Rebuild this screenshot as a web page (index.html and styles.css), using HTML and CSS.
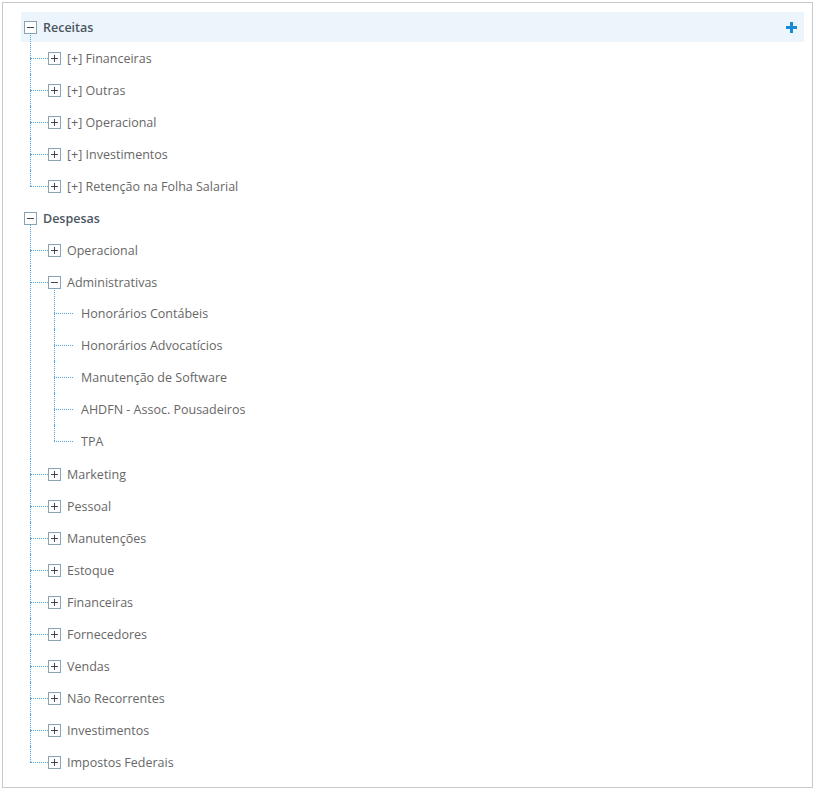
FILE: index.html
```html
<!DOCTYPE html>
<html>
<head>
<meta charset="utf-8">
<link rel="stylesheet" href="styles.css">
</head>
<body>
<div class="tree">
  <ul class="root">
    <li class="top">
      <div class="row row-top row-hover">
        <span class="tg minus"></span><span class="label strong">Receitas</span>
        <span class="add"><svg width="11" height="11" viewBox="0 0 11 11"><rect x="4" y="0" width="3" height="11" fill="#1a8ad4"/><rect x="0" y="4" width="11" height="3" fill="#1a8ad4"/></svg></span>
      </div>
      <ul class="children">
        <li><div class="row"><span class="tg plus"></span><span class="label">[+] Financeiras</span></div></li>
        <li><div class="row"><span class="tg plus"></span><span class="label">[+] Outras</span></div></li>
        <li><div class="row"><span class="tg plus"></span><span class="label">[+] Operacional</span></div></li>
        <li><div class="row"><span class="tg plus"></span><span class="label">[+] Investimentos</span></div></li>
        <li><div class="row"><span class="tg plus"></span><span class="label">[+] Retenção na Folha Salarial</span></div></li>
      </ul>
    </li>
    <li class="top">
      <div class="row row-top">
        <span class="tg minus"></span><span class="label strong">Despesas</span>
      </div>
      <ul class="children">
        <li><div class="row"><span class="tg plus"></span><span class="label">Operacional</span></div></li>
        <li>
          <div class="row"><span class="tg minus"></span><span class="label">Administrativas</span></div>
          <ul class="children leaves">
            <li><div class="row leaf"><span class="label">Honorários Contábeis</span></div></li>
            <li><div class="row leaf"><span class="label">Honorários Advocatícios</span></div></li>
            <li><div class="row leaf"><span class="label">Manutenção de Software</span></div></li>
            <li><div class="row leaf"><span class="label">AHDFN - Assoc. Pousadeiros</span></div></li>
            <li><div class="row leaf"><span class="label">TPA</span></div></li>
          </ul>
        </li>
        <li><div class="row"><span class="tg plus"></span><span class="label">Marketing</span></div></li>
        <li><div class="row"><span class="tg plus"></span><span class="label">Pessoal</span></div></li>
        <li><div class="row"><span class="tg plus"></span><span class="label">Manutenções</span></div></li>
        <li><div class="row"><span class="tg plus"></span><span class="label">Estoque</span></div></li>
        <li><div class="row"><span class="tg plus"></span><span class="label">Financeiras</span></div></li>
        <li><div class="row"><span class="tg plus"></span><span class="label">Fornecedores</span></div></li>
        <li><div class="row"><span class="tg plus"></span><span class="label">Vendas</span></div></li>
        <li><div class="row"><span class="tg plus"></span><span class="label">Não Recorrentes</span></div></li>
        <li><div class="row"><span class="tg plus"></span><span class="label">Investimentos</span></div></li>
        <li><div class="row"><span class="tg plus"></span><span class="label">Impostos Federais</span></div></li>
      </ul>
    </li>
  </ul>
</div>
</body>
</html>
```
FILE: styles.css
```css
html, body {
  margin: 0;
  padding: 0;
  background: #fff;
}
body {
  font-family: "Open Sans", "Liberation Sans", sans-serif;
  font-size: 12.5px;
  color: #676767;
}
.tree {
  margin: 2px;
  height: 786px;
  box-sizing: border-box;
  border: 1px solid #c9c9c9;
  padding: 9px 8px 8px 18px;
}
ul {
  list-style: none;
  margin: 0;
  padding: 0;
}
.row {
  display: flex;
  align-items: center;
  height: 32px;
  padding-left: 18px;
}
.row-top {
  padding-left: 3px;
}
.row-hover {
  height: 30px;
  background: #edf5fc;
}
.label {
  margin-left: 6px;
  white-space: nowrap;
}
.strong {
  font-weight: 600;
  color: #4b5661;
}
.leaf {
  padding-left: 27px;
}
.leaf .label {
  margin-left: 0;
}
.add {
  margin-left: auto;
  margin-right: 7px;
  display: flex;
}
.tg {
  position: relative;
  width: 13px;
  height: 13px;
  box-sizing: border-box;
  border: 1px solid #8aa3b3;
  background: #fff;
  flex: none;
}
.tg::before {
  content: "";
  position: absolute;
  left: 2px;
  top: 5px;
  width: 7px;
  height: 1px;
  background: #3c4650;
}
.plus::after {
  content: "";
  position: absolute;
  left: 5px;
  top: 2px;
  width: 1px;
  height: 7px;
  background: #3c4650;
}
.children {
  margin-left: 9px;
}
.leaves {
  margin-left: 24px;
  margin-top: -1px;
  margin-bottom: 1px;
}
.children > li {
  position: relative;
}
.children > li::before {
  content: "";
  position: absolute;
  left: 0;
  top: 0;
  bottom: 0;
  border-left: 1px dotted #4ea5df;
}
.children > li:first-child::before {
  top: -9px;
}
.children > li:last-child::before {
  bottom: auto;
  height: 16px;
}
.children > li::after {
  content: "";
  position: absolute;
  left: 0;
  top: 16px;
  width: 18px;
  border-top: 1px dotted #4ea5df;
}
.leaves > li::after {
  width: 19px;
}
```
